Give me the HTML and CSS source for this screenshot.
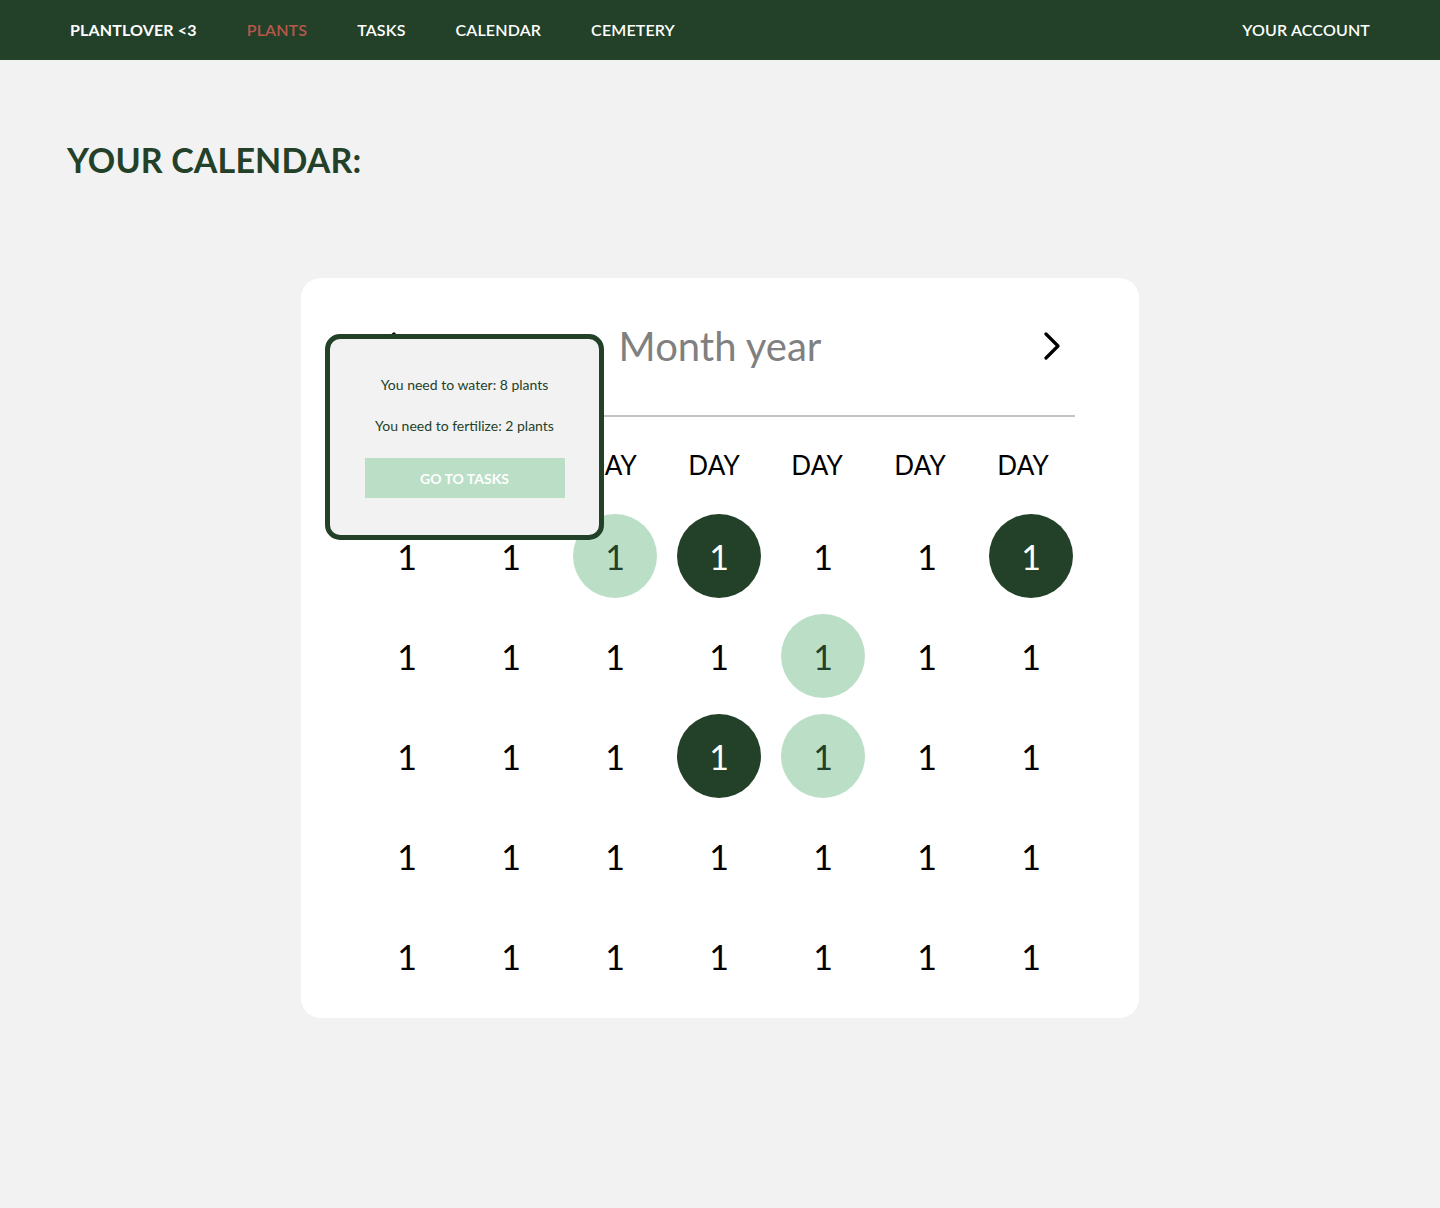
FILE: index.html
```html
<!DOCTYPE html>
<html lang="en">
<head>
<meta charset="utf-8">
<title>Plantlover - Calendar</title>
<link rel="stylesheet" href="styles.css">
</head>
<body>
<nav class="nav">
  <div class="nav-left">
    <a class="nav-brand" href="#">PLANTLOVER &lt;3</a>
    <a class="nav-link active" href="#">PLANTS</a>
    <a class="nav-link" href="#">TASKS</a>
    <a class="nav-link" href="#">CALENDAR</a>
    <a class="nav-link" href="#">CEMETERY</a>
  </div>
  <a class="nav-link" href="#">YOUR ACCOUNT</a>
</nav>

<main class="main">
  <h1 class="page-title">YOUR CALENDAR:</h1>

  <section class="card">
    <div class="cal-header">
      <button class="arrow" aria-label="Previous month">
        <svg width="18" height="28" viewBox="0 0 18 28"><path d="M15 2 L3 14 L15 26" fill="none" stroke="#000" stroke-width="3.2" stroke-linecap="round" stroke-linejoin="round"/></svg>
      </button>
      <div class="month">Month year</div>
      <button class="arrow" aria-label="Next month">
        <svg width="18" height="28" viewBox="0 0 18 28"><path d="M3 2 L15 14 L3 26" fill="none" stroke="#000" stroke-width="3.2" stroke-linecap="round" stroke-linejoin="round"/></svg>
      </button>
    </div>

    <div class="days">
      <div>DAY</div><div>DAY</div><div>DAY</div><div>DAY</div><div>DAY</div><div>DAY</div><div>DAY</div>
    </div>

    <div class="dates">
      <div class="date">1</div><div class="date">1</div><div class="date light">1</div><div class="date dark">1</div><div class="date">1</div><div class="date">1</div><div class="date dark">1</div>
      <div class="date">1</div><div class="date">1</div><div class="date">1</div><div class="date">1</div><div class="date light">1</div><div class="date">1</div><div class="date">1</div>
      <div class="date">1</div><div class="date">1</div><div class="date">1</div><div class="date dark">1</div><div class="date light">1</div><div class="date">1</div><div class="date">1</div>
      <div class="date">1</div><div class="date">1</div><div class="date">1</div><div class="date">1</div><div class="date">1</div><div class="date">1</div><div class="date">1</div>
      <div class="date">1</div><div class="date">1</div><div class="date">1</div><div class="date">1</div><div class="date">1</div><div class="date">1</div><div class="date">1</div>
    </div>

    <div class="tooltip">
      <p>You need to water: 8 plants</p>
      <p>You need to fertilize: 2 plants</p>
      <button class="tasks-btn">GO TO TASKS</button>
    </div>
  </section>
</main>
</body>
</html>
```

FILE: styles.css
```css
* { box-sizing: border-box; }

body {
  margin: 0;
  background: #f2f2f2;
  font-family: Lato, "Noto Sans", sans-serif;
  color: #000;
}

.nav {
  height: 60px;
  background: #234129;
  display: flex;
  align-items: center;
  justify-content: space-between;
  padding: 0 70px 2px;
}

.nav-left {
  display: flex;
  align-items: center;
  gap: 50px;
}

.nav a {
  color: #fff;
  text-decoration: none;
  font-size: 16px;
  letter-spacing: 0.15px;
}

.nav-brand { font-weight: 700; }
.nav-link { font-weight: 600; }
.nav-link.active { color: #b9574b; }

.main {
  padding: 79px 0 0;
}

.page-title {
  margin: 0 0 0 67px;
  font-size: 34px;
  font-weight: 700;
  color: #234129;
  line-height: 41px;
  letter-spacing: 0.15px;
}

.card {
  position: relative;
  width: 838px;
  margin: 98px auto 0;
  background: #fff;
  border-radius: 20px;
  padding: 45px 64px 20px;
}

.cal-header {
  display: flex;
  align-items: center;
  justify-content: space-between;
  height: 94px;
  padding: 0 14px 46px;
  border-bottom: 2px solid #c4c4c4;
}

.arrow {
  background: none;
  border: 0;
  padding: 0;
  display: flex;
  cursor: pointer;
}

.month {
  font-size: 40px;
  color: #808080;
  line-height: 48px;
}

.days {
  margin-top: 33px;
  display: grid;
  grid-template-columns: repeat(7, 84px);
  column-gap: 19px;
  margin-left: -2px;
  font-size: 26px;
  line-height: 31px;
  text-align: center;
}

.dates {
  margin-top: 33px;
  display: grid;
  grid-template-columns: repeat(7, 84px);
  justify-content: space-between;
  row-gap: 16px;
  margin-right: 2px;
}

.date {
  width: 84px;
  height: 84px;
  border-radius: 50%;
  display: flex;
  align-items: center;
  justify-content: center;
  font-size: 34px;
  color: #000;
}

.date.light { background: #bbdec6; color: #234129; }
.date.dark { background: #234129; color: #fff; }

.tooltip {
  position: absolute;
  left: 24px;
  top: 56px;
  width: 279px;
  height: 206px;
  background: #f2f2f2;
  border: 5px solid #234129;
  border-radius: 15px;
  padding: 37px 35px 0;
  display: flex;
  flex-direction: column;
  align-items: center;
  gap: 24px;
  color: #234129;
}

.tooltip p {
  margin: 0;
  font-size: 14px;
  line-height: 17px;
}

.tasks-btn {
  width: 200px;
  height: 40px;
  border: 0;
  background: #bbdec6;
  color: #fff;
  font-family: Lato, "Noto Sans", sans-serif;
  font-weight: 700;
  font-size: 14px;
  margin-top: 0;
  cursor: pointer;
}
```
